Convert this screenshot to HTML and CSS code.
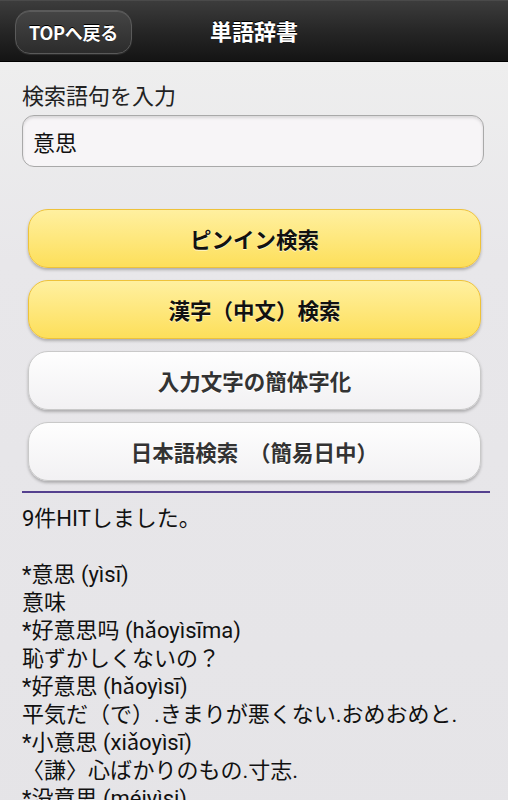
FILE: index.html
```html
<!DOCTYPE html>
<html lang="ja">
<head>
<meta charset="utf-8">
<title>単語辞書</title>
<link rel="stylesheet" href="styles.css">
</head>
<body>
<div class="page">
  <header class="bar">
    <a class="back">TOPへ戻る</a>
    <h1 class="title">単語辞書</h1>
  </header>
  <main class="content">
    <label class="label">検索語句を入力</label>
    <div class="input">意思</div>
    <div class="buttons">
      <div class="btn yellow">ピンイン検索</div>
      <div class="btn yellow">漢字（中文）検索</div>
      <div class="btn white">入力文字の簡体字化</div>
      <div class="btn white">日本語検索　（簡易日中）</div>
    </div>
    <hr class="divider">
    <div class="results">
      <p>9件HITしました。</p>
      <p>&nbsp;</p>
      <p>*意思 (yìsī)</p>
      <p>意味</p>
      <p>*好意思吗 (hǎoyìsīma)</p>
      <p>恥ずかしくないの？</p>
      <p>*好意思 (hǎoyìsī)</p>
      <p>平気だ（で）.きまりが悪くない.おめおめと.</p>
      <p>*小意思 (xiǎoyìsī)</p>
      <p>〈謙〉心ばかりのもの.寸志.</p>
      <p>*没意思 (méiyìsi)</p>
      <p>つまらない.</p>
    </div>
  </main>
</div>
</body>
</html>
```
FILE: styles.css
```css
* { box-sizing: border-box; }
html, body { margin: 0; padding: 0; }
body {
  background: #e8e7ea;
  font-family: Roboto, "Noto Sans CJK JP", sans-serif;
  color: #111;
  overflow: hidden;
}
.page { width: 508px; height: 800px; overflow: hidden; }
.bar {
  height: 62px;
  background: linear-gradient(#3c3c3c, #262626 50%, #141414);
  border-top: 1px solid #4a4a4a;
  border-bottom: 1px solid #000;
  display: flex;
  align-items: center;
  justify-content: center;
  position: relative;
}
.back {
  position: absolute;
  left: 15px;
  top: 9px;
  width: 117px;
  height: 44px;
  border-radius: 15px;
  border: 1px solid #5a5a5a;
  background: linear-gradient(#454545, #2c2c2c);
  box-shadow: inset 0 1px 0 rgba(255,255,255,0.12), 0 1px 1px rgba(255,255,255,0.1);
  color: #fff;
  font-family: "Noto Sans CJK JP", sans-serif;
  font-weight: 700;
  font-size: 18px;
  display: flex;
  align-items: center;
  justify-content: center;
  letter-spacing: -0.3px;
  text-shadow: 0 -1px 0 #000;
}
.title {
  margin: 0;
  color: #fff;
  font-family: "Noto Sans CJK JP", sans-serif;
  font-size: 22px;
  font-weight: 700;
  text-shadow: 0 -1px 0 #000;
  line-height: 1;
  margin-top: -2px;
}
.content {
  background: linear-gradient(#eeeeee, #e8e7ea 200px, #e5e4e7);
  padding: 21px 21px 0 22px;
}
.label {
  display: block;
  font-size: 22px;
  line-height: 28px;
  color: #222;
}
.input {
  margin-top: 4px;
  height: 52px;
  width: 462px;
  border: 1px solid #a9a9a9;
  border-radius: 12px;
  background: #f7f5f7;
  box-shadow: inset 0 2px 3px rgba(0,0,0,0.12);
  font-size: 22px;
  padding: 0 10px;
  display: flex;
  align-items: center;
  color: #111;
}
.buttons {
  margin-top: 42px;
  padding: 0 6px;
  display: flex;
  flex-direction: column;
  gap: 12px;
}
.btn {
  height: 59px;
  border-radius: 20px;
  display: flex;
  align-items: center;
  justify-content: center;
  font-family: "Noto Sans CJK JP", sans-serif;
  font-weight: 700;
  font-size: 21.5px;
  box-shadow: 0 2px 3px rgba(0,0,0,0.25);
}
.yellow {
  background: linear-gradient(#fff0a0, #fddf5a);
  border: 1px solid #eec23a;
  color: #111;
  text-shadow: 0 1px 0 #fff6c8;
}
.white {
  background: linear-gradient(#fefefe, #f2f1f3);
  border: 1px solid #c9c9c9;
  color: #333;
  text-shadow: 0 1px 0 #fff;
}
.divider {
  margin: 10px 0 0 0;
  border: 0;
  height: 2px;
  background: #55418f;
  width: 468px;
}
.results {
  padding-top: 12px;
  font-size: 22px;
  line-height: 28px;
  color: #111;
}
.results p { margin: 0; white-space: nowrap; }
```
